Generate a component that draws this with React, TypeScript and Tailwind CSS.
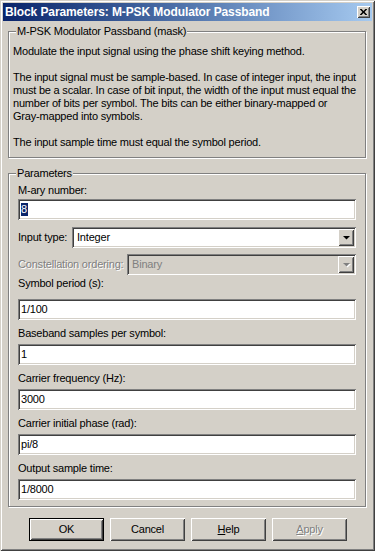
import React from "react";

const sunken =
  "shadow-[inset_1px_1px_0_#808080,inset_-1px_-1px_0_#ffffff,inset_2px_2px_0_#404040,inset_-2px_-2px_0_#d4d0c8]";
const raised =
  "shadow-[inset_1px_1px_0_#ffffff,inset_-1px_-1px_0_#404040,inset_2px_2px_0_#d4d0c8,inset_-2px_-2px_0_#808080]";
const emboss = "text-[#808080] [text-shadow:1px_1px_0_#ffffff]";

function Group({ legend, className, children }: { legend: string; className?: string; children: React.ReactNode }) {
  return (
    <div
      className={`relative ml-[5px] w-[358px] border border-[#808080] shadow-[1px_1px_0_#ffffff,inset_1px_1px_0_#ffffff] ${className ?? ""}`}
    >
      <span className="absolute left-[7px] top-[-7px] bg-[#d4d0c8] px-[1px] leading-[13px]">{legend}</span>
      {children}
    </div>
  );
}

function Edit({ value, selected }: { value: string; selected?: boolean }) {
  return (
    <div className={`flex h-[21px] items-center bg-white pl-[3px] ${sunken}`}>
      {selected ? (
        <span className="bg-[#0a246a] pr-[1px] leading-[13px] text-white">{value}</span>
      ) : (
        <span className="leading-[13px]">{value}</span>
      )}
    </div>
  );
}

function Arrow({ disabled }: { disabled?: boolean }) {
  return (
    <div className={`flex h-[17px] w-[16px] items-center justify-center bg-[#d4d0c8] ${raised}`}>
      <svg width="7" height="4" viewBox="0 0 7 4" className="overflow-visible">
        {disabled && <polygon points="1,1 8,1 4.5,4.5" fill="#ffffff" />}
        <polygon points="0,0 7,0 3.5,3.5" fill={disabled ? "#808080" : "#000000"} />
      </svg>
    </div>
  );
}

function Select({ value, disabled }: { value: string; disabled?: boolean }) {
  return (
    <div
      className={`flex h-[21px] flex-1 items-center justify-between p-[2px] pl-[5px] ${
        disabled ? "bg-[#d4d0c8]" : "bg-white"
      } ${sunken}`}
    >
      <span className={`leading-[13px] ${disabled ? "text-[#808080]" : ""}`}>{value}</span>
      <Arrow disabled={disabled} />
    </div>
  );
}

function Button({ children, def, disabled }: { children: React.ReactNode; def?: boolean; disabled?: boolean }) {
  return (
    <div
      className={`flex h-[23px] w-[75px] items-center justify-center ${
        def ? "border border-black" : ""
      } bg-[#d4d0c8]`}
    >
      <div className={`flex h-full w-full items-center justify-center ${raised} ${disabled ? emboss : ""}`}>
        {children}
      </div>
    </div>
  );
}

export default function App() {
  return (
    <div
      className="flex h-[551px] w-[375px] flex-col bg-[#d4d0c8] p-[3px] text-[11px] leading-[13px] tracking-[-0.2px] text-black shadow-[inset_1px_1px_0_#d4d0c8,inset_-1px_-1px_0_#404040,inset_2px_2px_0_#ffffff,inset_-2px_-2px_0_#808080] font-['Liberation_Sans',Arial,sans-serif]"
    >
      {/* title bar */}
      <div className="flex h-[18px] items-center justify-between bg-linear-to-r from-[#0a246a] to-[#a6caf0] pl-[2px] pr-[2px]">
        <span className="text-[12px] font-bold tracking-[-0.1px] text-white">
          Block Parameters: M-PSK Modulator Passband
        </span>
        <div className={`flex h-[12px] w-[13px] items-center justify-center bg-[#d4d0c8] ${raised}`}>
          <svg width="7" height="6" viewBox="0 0 7 6">
            <path d="M0 0h1.6l1.9 1.9L5.4 0H7v.6L4.6 3 7 5.4V6H5.4L3.5 4.1 1.6 6H0v-.6L2.4 3 0 .6z" fill="#000" />
          </svg>
        </div>
      </div>

      {/* mask description */}
      <Group legend="M-PSK Modulator Passband (mask)" className="mt-[10px] pb-[8px] pl-[4px] pt-[13px]">
        <p>Modulate the input signal using the phase shift keying method.</p>
        <p className="mt-[13px]">
          The input signal must be sample-based. In case of integer input, the input
          <br />
          must be a scalar. In case of bit input, the width of the input must equal the
          <br />
          number of bits per symbol. The bits can be either binary-mapped or
          <br />
          Gray-mapped into symbols.
        </p>
        <p className="mt-[13px]">The input sample time must equal the symbol period.</p>
      </Group>

      {/* parameters */}
      <Group legend="Parameters" className="mt-[15px] px-[9px] pb-[6px] pt-[10px]">
        <div>M-ary number:</div>
        <div className="mt-[2px]">
          <Edit value="8" selected />
        </div>

        <div className="mt-[7px] flex items-center gap-[3px]">
          <span className="w-[51px]">Input type:</span>
          <Select value="Integer" />
        </div>

        <div className="mt-[6px] flex items-center gap-[3px]">
          <span className={`w-[106px] ${emboss}`}>Constellation ordering:</span>
          <Select value="Binary" disabled />
        </div>

        <div className="mt-[2px]">Symbol period (s):</div>
        <div className="mt-[9px]">
          <Edit value="1/100" />
        </div>

        <div className="mt-[7px]">Baseband samples per symbol:</div>
        <div className="mt-[4px]">
          <Edit value="1" />
        </div>

        <div className="mt-[7px]">Carrier frequency (Hz):</div>
        <div className="mt-[4px]">
          <Edit value="3000" />
        </div>

        <div className="mt-[7px]">Carrier initial phase (rad):</div>
        <div className="mt-[4px]">
          <Edit value="pi/8" />
        </div>

        <div className="mt-[7px]">Output sample time:</div>
        <div className="mt-[4px]">
          <Edit value="1/8000" />
        </div>
      </Group>

      {/* buttons */}
      <div className="mt-[11px] flex justify-center gap-[6px] pl-[1px]">
        <Button def>OK</Button>
        <Button>Cancel</Button>
        <Button>
          <span>
            <span className="underline">H</span>elp
          </span>
        </Button>
        <Button disabled>
          <span>
            <span className="underline">A</span>pply
          </span>
        </Button>
      </div>
    </div>
  );
}
